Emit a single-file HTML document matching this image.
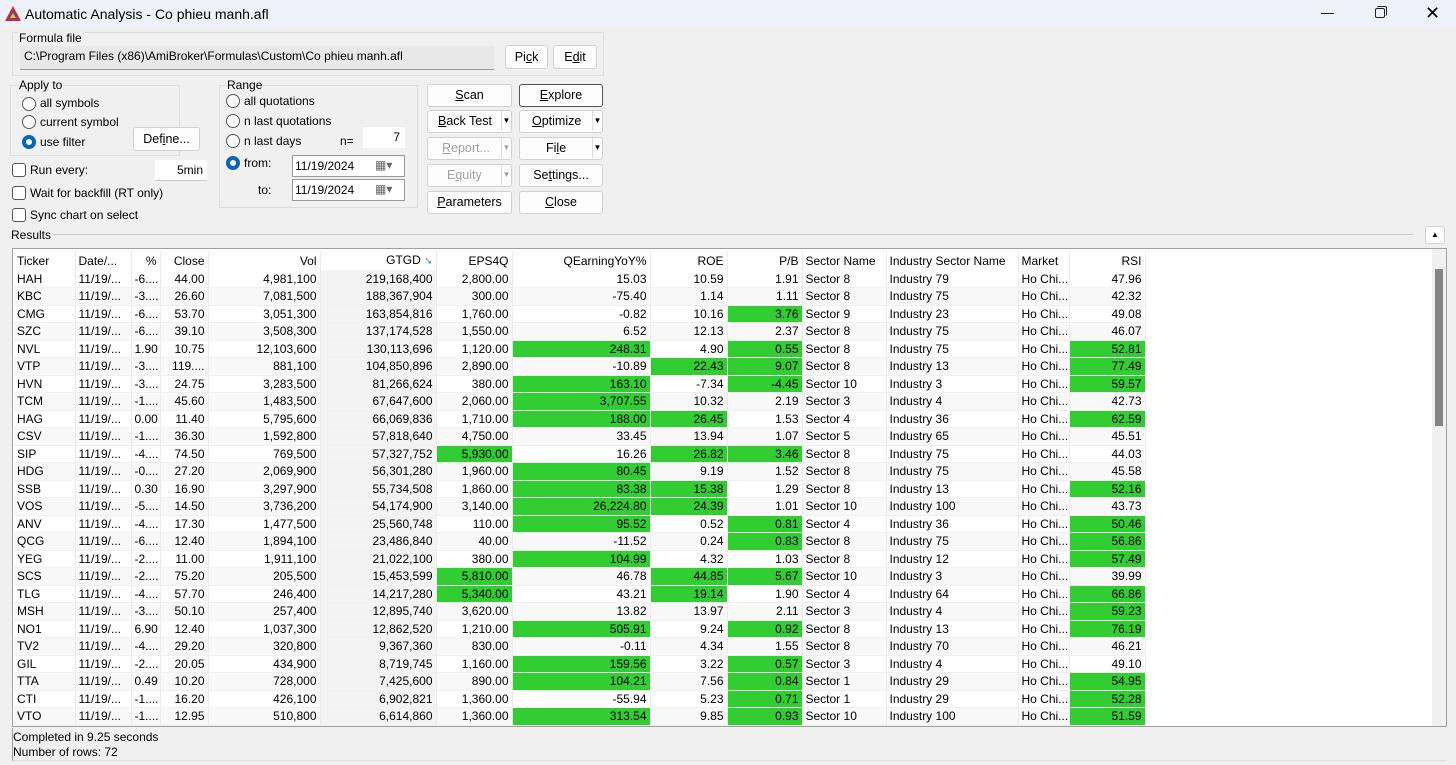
<!DOCTYPE html>
<html><head><meta charset="utf-8"><style>
*{box-sizing:border-box;margin:0;padding:0}
body{width:1456px;height:765px;background:#f0f0f0;font-family:"Liberation Sans",sans-serif;font-size:12px;color:#000;position:relative;overflow:hidden}
.a{position:absolute}
.title{left:0;top:0;width:1456px;height:28px;background:#eef2f8}
.btn{position:absolute;background:#fdfdfd;border:1px solid #d0d0d0;border-radius:3px;text-align:center;line-height:20px;font-size:12.5px}
.dis{color:#a0a0a0}
.grp{position:absolute;border:1px solid #dcdcdc}
.radio{position:absolute;width:14px;height:14px;border:1px solid #555;border-radius:50%;background:#fff}
.radio.on{border:4px solid #0a64b8}
.chk{position:absolute;width:14px;height:14px;border:1px solid #555;border-radius:3px;background:#fff}
.dd{position:absolute;width:10px;border-left:1px solid #ddd;font-size:8px;line-height:20px;text-align:center}
table{border-collapse:collapse;table-layout:fixed;position:absolute;left:14px;top:251px;width:1131px}
td{height:17.5px;padding:0 3px;white-space:nowrap;overflow:hidden;border-right:1px solid #ebebeb;border-bottom:1px solid #f0f0f0;line-height:16px}
td.r{text-align:right}
tr.h td{height:19px;border-bottom:none}
tr:nth-child(odd):not(.h) td{background:#f8f8f8}
td.s{background:#f3f3f3!important}
td.g{background:#32cd32!important}
</style></head><body>
<div class="a title"></div>
<svg class="a" style="left:4px;top:5px" width="18" height="17" viewBox="0 0 18 17"><path d="M9 1 L17 16 L1 16 Z" fill="#e0261c"/><path d="M9 5 L14 14 L4 14 Z" fill="#2a5bd7"/><path d="M9 8 L12 13 L6 13Z" fill="#f2c400"/></svg>
<div class="a" style="left:25px;top:6px;font-size:14px">Automatic Analysis - Co phieu manh.afl</div>
<div class="a" style="left:1321px;top:13px;width:13px;height:1px;background:#222"></div>
<div class="a" style="left:1375px;top:8px;width:10px;height:10px;border:1px solid #222;border-radius:2px;background:#eef2f8"></div>
<div class="a" style="left:1377px;top:6px;width:10px;height:10px;border-top:1px solid #222;border-right:1px solid #222;border-radius:2px"></div>
<div class="a" style="left:1425px;top:2px;font-size:18px;line-height:22px">✕</div>

<div class="grp" style="left:12px;top:32px;width:592px;height:44px"></div>
<div class="a" style="left:18px;top:31px;background:#f0f0f0;padding:0 1px">Formula file</div>
<div class="a" style="left:20px;top:46px;width:474px;height:24px;background:#e8e8e8;border-bottom:1px solid #999;padding:3px 4px">C:\Program Files (x86)\AmiBroker\Formulas\Custom\Co phieu manh.afl</div>
<div class="btn" style="left:505px;top:45px;width:43px;height:24px;line-height:22px">Pi<u>c</u>k</div>
<div class="btn" style="left:553px;top:45px;width:44px;height:24px;line-height:22px">E<u>d</u>it</div>

<div class="grp" style="left:10px;top:85px;width:170px;height:71px"></div>
<div class="a" style="left:18px;top:78px;background:#f0f0f0;padding:0 1px">Apply to</div>
<div class="radio" style="left:22px;top:97px"></div><div class="a" style="left:40px;top:96px">all symbols</div>
<div class="radio" style="left:22px;top:115px"></div><div class="a" style="left:40px;top:115px">current symbol</div>
<div class="radio on" style="left:22px;top:135px"></div><div class="a" style="left:40px;top:135px">use filter</div>
<div class="btn" style="left:133px;top:127px;width:67px;height:24px;line-height:22px">Def<u>i</u>ne...</div>
<div class="chk" style="left:12px;top:163px"></div><div class="a" style="left:30px;top:163px">Run every:</div>
<div class="a" style="left:155px;top:160px;width:52px;height:21px;background:#fff;border-bottom:1px solid #ccc;text-align:right;padding:3px 4px">5min</div>
<div class="chk" style="left:12px;top:186px"></div><div class="a" style="left:30px;top:186px">Wait for backfill (RT only)</div>
<div class="chk" style="left:12px;top:208px"></div><div class="a" style="left:30px;top:208px">Sync chart on select</div>

<div class="grp" style="left:219px;top:85px;width:199px;height:123px"></div>
<div class="a" style="left:226px;top:78px;background:#f0f0f0;padding:0 1px">Range</div>
<div class="radio" style="left:226px;top:94px"></div><div class="a" style="left:244px;top:94px">all quotations</div>
<div class="radio" style="left:226px;top:114px"></div><div class="a" style="left:244px;top:114px">n last quotations</div>
<div class="radio" style="left:226px;top:134px"></div><div class="a" style="left:244px;top:134px">n last days</div>
<div class="a" style="left:340px;top:134px">n=</div>
<div class="a" style="left:363px;top:127px;width:42px;height:21px;background:#fff;text-align:right;padding:3px 5px">7</div>
<div class="radio on" style="left:226px;top:156px"></div><div class="a" style="left:244px;top:156px">from:</div>
<div class="a" style="left:292px;top:155px;width:113px;height:22px;background:#fff;border:1px solid #999;padding:3px 2px">11/19/2024<span style="position:absolute;left:82px;top:2px;color:#666">▦▾</span></div>
<div class="a" style="left:258px;top:183px">to:</div>
<div class="a" style="left:292px;top:179px;width:113px;height:22px;background:#fff;border:1px solid #999;padding:3px 2px">11/19/2024<span style="position:absolute;left:82px;top:2px;color:#666">▦▾</span></div>

<div class="btn" style="left:427px;top:84px;width:85px;height:23px"><u>S</u>can</div>
<div class="btn" style="left:519px;top:84px;width:84px;height:23px;border:1px solid #555"><u>E</u>xplore</div>
<div class="btn" style="left:427px;top:110px;width:85px;height:23px;text-align:left;padding-left:10px"><u>B</u>ack Test<div class="dd" style="right:0;top:0;font-size:8px">▼</div></div>
<div class="btn" style="left:519px;top:110px;width:84px;height:23px;text-align:left;padding-left:12px"><u>O</u>ptimize<div class="dd" style="right:0;top:0">▼</div></div>
<div class="btn dis" style="left:427px;top:137px;width:85px;height:23px;text-align:left;padding-left:14px"><u>R</u>eport...<div class="dd" style="right:0;top:0">▼</div></div>
<div class="btn" style="left:519px;top:137px;width:84px;height:23px;text-align:left;padding-left:26px">Fi<u>l</u>e<div class="dd" style="right:0;top:0">▼</div></div>
<div class="btn dis" style="left:427px;top:164px;width:85px;height:23px;text-align:left;padding-left:19px">E<u>q</u>uity<div class="dd" style="right:0;top:0">▼</div></div>
<div class="btn" style="left:519px;top:164px;width:84px;height:23px">Se<u>t</u>tings...</div>
<div class="btn" style="left:427px;top:191px;width:85px;height:23px"><u>P</u>arameters</div>
<div class="btn" style="left:519px;top:191px;width:84px;height:23px"><u>C</u>lose</div>

<div class="a" style="left:11px;top:228px">Results</div>
<div class="a" style="left:53px;top:234px;width:1360px;height:1px;background:#c8c8c8"></div>
<div class="btn" style="left:1425px;top:226px;width:20px;height:18px;line-height:16px;font-size:8px">▲</div>

<div class="a" style="left:12px;top:248px;width:1435px;height:479px;background:#fff;border:1px solid #a0a0a0"></div>
<div class="a" style="left:1432px;top:249px;width:14px;height:477px;background:#f0f0f0"></div>
<div class="a" style="left:1435px;top:269px;width:8px;height:157px;background:#858585"></div>

<table>
<colgroup><col style="width:61px"><col style="width:56px"><col style="width:29px"><col style="width:48px"><col style="width:112px"><col style="width:116px"><col style="width:76px"><col style="width:138px"><col style="width:77px"><col style="width:75px"><col style="width:84px"><col style="width:132px"><col style="width:51px"><col style="width:76px"></colgroup>
<tr class="h"><td>Ticker</td><td>Date/...</td><td class="r">%</td><td class="r">Close</td><td class="r">Vol</td><td class="r">GTGD <span style="color:#2a8fe0;font-size:10px">➘</span></td><td class="r">EPS4Q</td><td class="r">QEarningYoY%</td><td class="r">ROE</td><td class="r">P/B</td><td>Sector Name</td><td>Industry Sector Name</td><td>Market</td><td class="r">RSI</td></tr>
<tr><td>HAH</td><td>11/19/...</td><td>-6....</td><td class="r">44.00</td><td class="r">4,981,100</td><td class="r s">219,168,400</td><td class="r">2,800.00</td><td class="r">15.03</td><td class="r">10.59</td><td class="r">1.91</td><td>Sector 8</td><td>Industry 79</td><td>Ho Chi...</td><td class="r">47.96</td></tr>
<tr><td>KBC</td><td>11/19/...</td><td>-3....</td><td class="r">26.60</td><td class="r">7,081,500</td><td class="r s">188,367,904</td><td class="r">300.00</td><td class="r">-75.40</td><td class="r">1.14</td><td class="r">1.11</td><td>Sector 8</td><td>Industry 75</td><td>Ho Chi...</td><td class="r">42.32</td></tr>
<tr><td>CMG</td><td>11/19/...</td><td>-6....</td><td class="r">53.70</td><td class="r">3,051,300</td><td class="r s">163,854,816</td><td class="r">1,760.00</td><td class="r">-0.82</td><td class="r">10.16</td><td class="r g">3.76</td><td>Sector 9</td><td>Industry 23</td><td>Ho Chi...</td><td class="r">49.08</td></tr>
<tr><td>SZC</td><td>11/19/...</td><td>-6....</td><td class="r">39.10</td><td class="r">3,508,300</td><td class="r s">137,174,528</td><td class="r">1,550.00</td><td class="r">6.52</td><td class="r">12.13</td><td class="r">2.37</td><td>Sector 8</td><td>Industry 75</td><td>Ho Chi...</td><td class="r">46.07</td></tr>
<tr><td>NVL</td><td>11/19/...</td><td class="r">1.90</td><td class="r">10.75</td><td class="r">12,103,600</td><td class="r s">130,113,696</td><td class="r">1,120.00</td><td class="r g">248.31</td><td class="r">4.90</td><td class="r g">0.55</td><td>Sector 8</td><td>Industry 75</td><td>Ho Chi...</td><td class="r g">52.81</td></tr>
<tr><td>VTP</td><td>11/19/...</td><td>-3....</td><td class="r">119....</td><td class="r">881,100</td><td class="r s">104,850,896</td><td class="r">2,890.00</td><td class="r">-10.89</td><td class="r g">22.43</td><td class="r g">9.07</td><td>Sector 8</td><td>Industry 13</td><td>Ho Chi...</td><td class="r g">77.49</td></tr>
<tr><td>HVN</td><td>11/19/...</td><td>-3....</td><td class="r">24.75</td><td class="r">3,283,500</td><td class="r s">81,266,624</td><td class="r">380.00</td><td class="r g">163.10</td><td class="r">-7.34</td><td class="r g">-4.45</td><td>Sector 10</td><td>Industry 3</td><td>Ho Chi...</td><td class="r g">59.57</td></tr>
<tr><td>TCM</td><td>11/19/...</td><td>-1....</td><td class="r">45.60</td><td class="r">1,483,500</td><td class="r s">67,647,600</td><td class="r">2,060.00</td><td class="r g">3,707.55</td><td class="r">10.32</td><td class="r">2.19</td><td>Sector 3</td><td>Industry 4</td><td>Ho Chi...</td><td class="r">42.73</td></tr>
<tr><td>HAG</td><td>11/19/...</td><td class="r">0.00</td><td class="r">11.40</td><td class="r">5,795,600</td><td class="r s">66,069,836</td><td class="r">1,710.00</td><td class="r g">188.00</td><td class="r g">26.45</td><td class="r">1.53</td><td>Sector 4</td><td>Industry 36</td><td>Ho Chi...</td><td class="r g">62.59</td></tr>
<tr><td>CSV</td><td>11/19/...</td><td>-1....</td><td class="r">36.30</td><td class="r">1,592,800</td><td class="r s">57,818,640</td><td class="r">4,750.00</td><td class="r">33.45</td><td class="r">13.94</td><td class="r">1.07</td><td>Sector 5</td><td>Industry 65</td><td>Ho Chi...</td><td class="r">45.51</td></tr>
<tr><td>SIP</td><td>11/19/...</td><td>-4....</td><td class="r">74.50</td><td class="r">769,500</td><td class="r s">57,327,752</td><td class="r g">5,930.00</td><td class="r">16.26</td><td class="r g">26.82</td><td class="r g">3.46</td><td>Sector 8</td><td>Industry 75</td><td>Ho Chi...</td><td class="r">44.03</td></tr>
<tr><td>HDG</td><td>11/19/...</td><td>-0....</td><td class="r">27.20</td><td class="r">2,069,900</td><td class="r s">56,301,280</td><td class="r">1,960.00</td><td class="r g">80.45</td><td class="r">9.19</td><td class="r">1.52</td><td>Sector 8</td><td>Industry 75</td><td>Ho Chi...</td><td class="r">45.58</td></tr>
<tr><td>SSB</td><td>11/19/...</td><td class="r">0.30</td><td class="r">16.90</td><td class="r">3,297,900</td><td class="r s">55,734,508</td><td class="r">1,860.00</td><td class="r g">83.38</td><td class="r g">15.38</td><td class="r">1.29</td><td>Sector 8</td><td>Industry 13</td><td>Ho Chi...</td><td class="r g">52.16</td></tr>
<tr><td>VOS</td><td>11/19/...</td><td>-5....</td><td class="r">14.50</td><td class="r">3,736,200</td><td class="r s">54,174,900</td><td class="r">3,140.00</td><td class="r g">26,224.80</td><td class="r g">24.39</td><td class="r">1.01</td><td>Sector 10</td><td>Industry 100</td><td>Ho Chi...</td><td class="r">43.73</td></tr>
<tr><td>ANV</td><td>11/19/...</td><td>-4....</td><td class="r">17.30</td><td class="r">1,477,500</td><td class="r s">25,560,748</td><td class="r">110.00</td><td class="r g">95.52</td><td class="r">0.52</td><td class="r g">0.81</td><td>Sector 4</td><td>Industry 36</td><td>Ho Chi...</td><td class="r g">50.46</td></tr>
<tr><td>QCG</td><td>11/19/...</td><td>-6....</td><td class="r">12.40</td><td class="r">1,894,100</td><td class="r s">23,486,840</td><td class="r">40.00</td><td class="r">-11.52</td><td class="r">0.24</td><td class="r g">0.83</td><td>Sector 8</td><td>Industry 75</td><td>Ho Chi...</td><td class="r g">56.86</td></tr>
<tr><td>YEG</td><td>11/19/...</td><td>-2....</td><td class="r">11.00</td><td class="r">1,911,100</td><td class="r s">21,022,100</td><td class="r">380.00</td><td class="r g">104.99</td><td class="r">4.32</td><td class="r">1.03</td><td>Sector 8</td><td>Industry 12</td><td>Ho Chi...</td><td class="r g">57.49</td></tr>
<tr><td>SCS</td><td>11/19/...</td><td>-2....</td><td class="r">75.20</td><td class="r">205,500</td><td class="r s">15,453,599</td><td class="r g">5,810.00</td><td class="r">46.78</td><td class="r g">44.85</td><td class="r g">5.67</td><td>Sector 10</td><td>Industry 3</td><td>Ho Chi...</td><td class="r">39.99</td></tr>
<tr><td>TLG</td><td>11/19/...</td><td>-4....</td><td class="r">57.70</td><td class="r">246,400</td><td class="r s">14,217,280</td><td class="r g">5,340.00</td><td class="r">43.21</td><td class="r g">19.14</td><td class="r">1.90</td><td>Sector 4</td><td>Industry 64</td><td>Ho Chi...</td><td class="r g">66.86</td></tr>
<tr><td>MSH</td><td>11/19/...</td><td>-3....</td><td class="r">50.10</td><td class="r">257,400</td><td class="r s">12,895,740</td><td class="r">3,620.00</td><td class="r">13.82</td><td class="r">13.97</td><td class="r">2.11</td><td>Sector 3</td><td>Industry 4</td><td>Ho Chi...</td><td class="r g">59.23</td></tr>
<tr><td>NO1</td><td>11/19/...</td><td class="r">6.90</td><td class="r">12.40</td><td class="r">1,037,300</td><td class="r s">12,862,520</td><td class="r">1,210.00</td><td class="r g">505.91</td><td class="r">9.24</td><td class="r g">0.92</td><td>Sector 8</td><td>Industry 13</td><td>Ho Chi...</td><td class="r g">76.19</td></tr>
<tr><td>TV2</td><td>11/19/...</td><td>-4....</td><td class="r">29.20</td><td class="r">320,800</td><td class="r s">9,367,360</td><td class="r">830.00</td><td class="r">-0.11</td><td class="r">4.34</td><td class="r">1.55</td><td>Sector 8</td><td>Industry 70</td><td>Ho Chi...</td><td class="r">46.21</td></tr>
<tr><td>GIL</td><td>11/19/...</td><td>-2....</td><td class="r">20.05</td><td class="r">434,900</td><td class="r s">8,719,745</td><td class="r">1,160.00</td><td class="r g">159.56</td><td class="r">3.22</td><td class="r g">0.57</td><td>Sector 3</td><td>Industry 4</td><td>Ho Chi...</td><td class="r">49.10</td></tr>
<tr><td>TTA</td><td>11/19/...</td><td class="r">0.49</td><td class="r">10.20</td><td class="r">728,000</td><td class="r s">7,425,600</td><td class="r">890.00</td><td class="r g">104.21</td><td class="r">7.56</td><td class="r g">0.84</td><td>Sector 1</td><td>Industry 29</td><td>Ho Chi...</td><td class="r g">54.95</td></tr>
<tr><td>CTI</td><td>11/19/...</td><td>-1....</td><td class="r">16.20</td><td class="r">426,100</td><td class="r s">6,902,821</td><td class="r">1,360.00</td><td class="r">-55.94</td><td class="r">5.23</td><td class="r g">0.71</td><td>Sector 1</td><td>Industry 29</td><td>Ho Chi...</td><td class="r g">52.28</td></tr>
<tr><td>VTO</td><td>11/19/...</td><td>-1....</td><td class="r">12.95</td><td class="r">510,800</td><td class="r s">6,614,860</td><td class="r">1,360.00</td><td class="r g">313.54</td><td class="r">9.85</td><td class="r g">0.93</td><td>Sector 10</td><td>Industry 100</td><td>Ho Chi...</td><td class="r g">51.59</td></tr>
</table>

<div class="a" style="left:12px;top:728px;width:1435px;height:33px;border-left:1px solid #a0a0a0;border-bottom:1px solid #ddd"></div>
<div class="a" style="left:13px;top:730px">Completed in 9.25 seconds</div>
<div class="a" style="left:13px;top:745px">Number of rows: 72</div>
</body></html>
